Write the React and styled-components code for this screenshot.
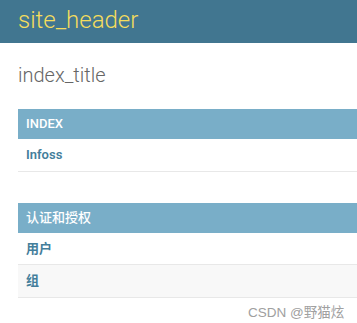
import React from "react";
import styled, { createGlobalStyle } from "styled-components";

const GlobalStyle = createGlobalStyle`
  html, body {
    margin: 0;
    padding: 0;
    background: #fff;
    font-family: Roboto, "Noto Sans CJK SC", "Liberation Sans", sans-serif;
    overflow: hidden;
  }
`;

const Page = styled.div`
  position: relative;
  width: 357px;
  height: 323px;
  overflow: hidden;
`;

const Header = styled.div`
  height: 43px;
  background: #417690;
  display: flex;
  align-items: center;
  padding: 0 18px;
`;

const Branding = styled.h1`
  margin: 0;
  font-size: 24px;
  font-weight: 300;
  color: #f5dd5d;
  line-height: 1;
  margin-top: -3px;
`;

const Content = styled.div`
  padding: 20px 0 0 18px;
`;

const Title = styled.h1`
  margin: 0 0 22px;
  font-size: 20px;
  font-weight: 300;
  color: #666;
  line-height: 24px;
`;

const Module = styled.table`
  width: 420px;
  border-collapse: collapse;
  margin-bottom: 31px;
`;

const Caption = styled.caption`
  text-align: left;
  background: #79aec8;
  color: #fff;
  font-size: 13px;
  font-weight: 500;
  padding: 7px 8px;
  line-height: 16px;
`;

const Row = styled.tr`
  background: ${(p) => (p.$alt ? "#f8f8f8" : "#fff")};
  border-bottom: 1px solid #e8e8e8;
`;

const Cell = styled.th`
  text-align: left;
  padding: 8px;
  font-size: 13px;
  font-weight: 600;
  color: #447e9b;
  line-height: 15.5px;
`;

const Watermark = styled.div`
  position: absolute;
  left: 248px;
  top: 301px;
  font-family: "Liberation Sans", "Noto Sans CJK SC", sans-serif;
  font-size: 13.5px;
  color: #a0a0a0;
`;

const apps = [
  { name: "INDEX", models: ["Infoss"] },
  { name: "认证和授权", models: ["用户", "组"] },
];

export default function App() {
  return (
    <Page>
      <GlobalStyle />
      <Header>
        <Branding>site_header</Branding>
      </Header>
      <Content>
        <Title>index_title</Title>
        {apps.map((app) => (
          <Module key={app.name}>
            <Caption>{app.name}</Caption>
            <tbody>
              {app.models.map((m, i) => (
                <Row key={m} $alt={i % 2 === 1}>
                  <Cell>{m}</Cell>
                </Row>
              ))}
            </tbody>
          </Module>
        ))}
      </Content>
      <Watermark>CSDN @野猫炫</Watermark>
    </Page>
  );
}
